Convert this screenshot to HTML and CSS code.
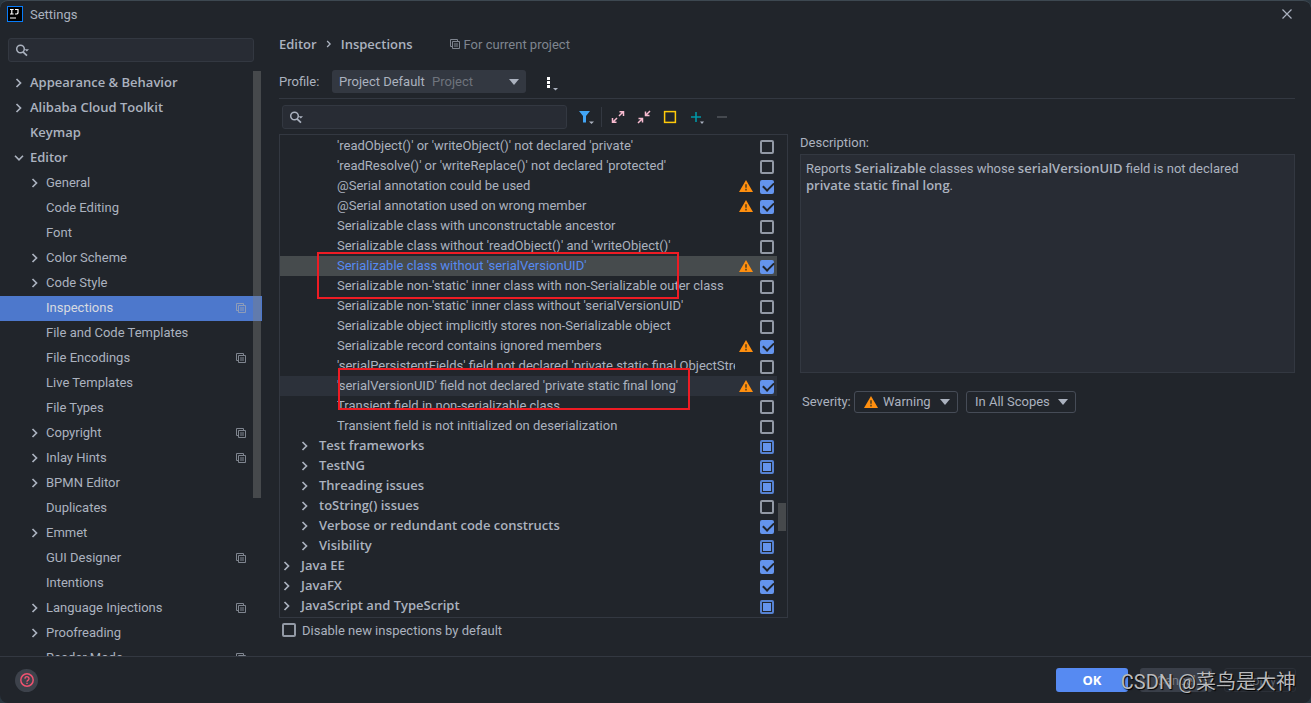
FILE: index.html
```html
<!DOCTYPE html>
<html lang="en">
<head>
<meta charset="utf-8">
<title>Settings</title>
<link rel="stylesheet" href="styles.css">
</head>
<body>
<svg class="defs" aria-hidden="true">
  <symbol id="right" viewBox="0 0 8 10"><path d="M1.5 1 5.500 5 1.500 9" fill="none" stroke="currentColor" stroke-width="1.700"/></symbol>
  <symbol id="down" viewBox="0 0 10 8"><path d="M1 1.7 5 5.9 9 1.7" fill="none" stroke="currentColor" stroke-width="1.6"/></symbol>
  <symbol id="copy" viewBox="0 0 10 10"><path d="M2.5 7.5h-2v-7h7v2M2.5 2.5h7v7h-7zM4 5h4M4 7h4" fill="none" stroke="currentColor"/></symbol>
  <symbol id="warn" viewBox="0 0 14 12"><path d="M7 0 14 12H0z" fill="#ff8f0f"/><path d="M7 4.2v3.6M7 8.8v1.7" stroke="#6b4a1c" stroke-width="1.8"/></symbol>
  <symbol id="search" viewBox="0 0 15 13"><circle cx="5.5" cy="5" r="3.8" fill="none" stroke="currentColor" stroke-width="1.5"/><path d="m8 7.8 4 3.8" stroke="currentColor" stroke-width="1.7"/><path d="M9.5 5.2H14L11.8 7.6z" fill="currentColor"/></symbol>
  <symbol id="caret" viewBox="0 0 10 6"><path d="M0 0h10L5 6z" fill="currentColor"/></symbol>
</svg>
<div class="window">
  <header class="titlebar">
    <svg class="logo" viewBox="0 0 16 16"><path d="M0 0h16v16H0z" fill="#087cfa"/><path d="M1 1h14v14H1z" fill="#000"/><path d="M3 3.5h3.6M4.8 3.5V8M3 8h3.6M8 3.5h3V7L10 8H8" fill="none" stroke="#fff" stroke-width="1.2"/><path d="M3 12h6" stroke="#fff" stroke-width="1.2"/></svg>
    <h1 class="title">Settings</h1>
    <button class="plain close" aria-label="Close"><svg viewBox="0 0 10 10" width="10" height="10"><path d="m.5.5 9 9m0-9-9 9" stroke="currentColor" stroke-width="1.2"/></svg></button>
  </header>
  <div class="content">
    <aside class="sidebar">
      <label class="search side-search"><svg><use href="#search"/></svg><input type="text" aria-label="Search settings"></label>
      <nav class="nav">
        <ul class="nav-list">
          <li class="top"><svg class="arrow"><use href="#right"/></svg><span>Appearance &amp; Behavior</span></li>
          <li class="top"><svg class="arrow"><use href="#right"/></svg><span>Alibaba Cloud Toolkit</span></li>
          <li class="top"><i class="arrow"></i><span>Keymap</span></li>
          <li class="top"><svg class="arrow open"><use href="#down"/></svg><span>Editor</span></li>
          <li><svg class="arrow"><use href="#right"/></svg><span>General</span></li>
          <li><i class="arrow"></i><span>Code Editing</span></li>
          <li><i class="arrow"></i><span>Font</span></li>
          <li><svg class="arrow"><use href="#right"/></svg><span>Color Scheme</span></li>
          <li><svg class="arrow"><use href="#right"/></svg><span>Code Style</span></li>
          <li class="selected"><i class="arrow"></i><span>Inspections</span><svg class="copy"><use href="#copy"/></svg></li>
          <li><i class="arrow"></i><span>File and Code Templates</span></li>
          <li><i class="arrow"></i><span>File Encodings</span><svg class="copy"><use href="#copy"/></svg></li>
          <li><i class="arrow"></i><span>Live Templates</span></li>
          <li><i class="arrow"></i><span>File Types</span></li>
          <li><svg class="arrow"><use href="#right"/></svg><span>Copyright</span><svg class="copy"><use href="#copy"/></svg></li>
          <li><svg class="arrow"><use href="#right"/></svg><span>Inlay Hints</span><svg class="copy"><use href="#copy"/></svg></li>
          <li><svg class="arrow"><use href="#right"/></svg><span>BPMN Editor</span></li>
          <li><i class="arrow"></i><span>Duplicates</span></li>
          <li><svg class="arrow"><use href="#right"/></svg><span>Emmet</span></li>
          <li><i class="arrow"></i><span>GUI Designer</span><svg class="copy"><use href="#copy"/></svg></li>
          <li><i class="arrow"></i><span>Intentions</span></li>
          <li><svg class="arrow"><use href="#right"/></svg><span>Language Injections</span><svg class="copy"><use href="#copy"/></svg></li>
          <li><svg class="arrow"><use href="#right"/></svg><span>Proofreading</span></li>
          <li><i class="arrow"></i><span>Reader Mode</span><svg class="copy"><use href="#copy"/></svg></li>
        </ul>
        <div class="thumb"></div>
      </nav>
    </aside>
    <main class="main">
      <div class="crumbs">
        <b>Editor</b><svg class="sep"><use href="#right"/></svg><b>Inspections</b>
        <span class="scope"><svg class="copy"><use href="#copy"/></svg>For current project</span>
      </div>
      <div class="profile">
        <label for="profile">Profile:</label>
        <div class="combo filled">
          <select id="profile"><option>Project Default</option></select>
          <span class="hint">Project</span>
          <svg class="caret"><use href="#caret"/></svg>
        </div>
        <button class="plain more" aria-label="Profile actions"><svg viewBox="0 0 12 14" width="12" height="14"><path d="M1 0h3v3H1zm0 4h3v3H1zm0 4h3v3H1z" fill="#fff"/><path d="M7 11h5l-2.5 2.5z" fill="#abb2bf"/></svg></button>
      </div>
      <div class="panes">
        <section class="inspections">
          <div class="toolbar">
            <label class="search"><svg><use href="#search"/></svg><input type="text" aria-label="Search inspections"></label>
            <div class="tools">
              <button class="plain" aria-label="Filter"><svg viewBox="0 0 16 16"><path d="M0 2h11L7 7v6.500H4V7z" fill="#42a5f5"/><path d="M10 12.5h5L12.5 15z" fill="#abb2bf"/></svg></button>
              <span class="rule"></span>
              <button class="plain" aria-label="Expand all"><svg viewBox="0 0 16 16"><path d="M9 7l4.5-4.5M9.5 2.7h4V7M7 9l-4.500 4.500M6.500 13.300h-4V9" fill="none" stroke="#f8bbd0" stroke-width="1.5"/></svg></button>
              <button class="plain" aria-label="Collapse all"><svg viewBox="0 0 16 16"><path d="M14 2 9.500 6.500M9.500 2.500v4h4M2 14l4.500-4.500M6.500 13.500v-4h-4" fill="none" stroke="#f8bbd0" stroke-width="1.5"/></svg></button>
              <button class="plain" aria-label="Reset"><svg viewBox="0 0 16 16"><rect x="2.600" y="2.600" width="10.800" height="10.800" fill="none" stroke="#ffca0a" stroke-width="1.500"/></svg></button>
              <button class="plain" aria-label="Add"><svg viewBox="0 0 16 16"><path d="M3 8h10M8 3v10" stroke="#0097a7" stroke-width="1.600"/><path d="M12 12.500h4L14 15z" fill="#abb2bf"/></svg></button>
              <button class="plain" aria-label="Remove" disabled><svg viewBox="0 0 16 16"><path d="M3 8h10" stroke="#45494f" stroke-width="2"/></svg></button>
            </div>
          </div>
          <div class="tree">
            <ul class="tree-list">
              <li><label for="c1">'readObject()' or 'writeObject()' not declared 'private'</label><input type="checkbox" id="c1"></li>
              <li><label for="c2">'readResolve()' or 'writeReplace()' not declared 'protected'</label><input type="checkbox" id="c2"></li>
              <li><label for="c3">@Serial annotation could be used</label><svg class="warn"><use href="#warn"/></svg><input type="checkbox" id="c3" checked></li>
              <li><label for="c4">@Serial annotation used on wrong member</label><svg class="warn"><use href="#warn"/></svg><input type="checkbox" id="c4" checked></li>
              <li><label for="c5">Serializable class with unconstructable ancestor</label><input type="checkbox" id="c5"></li>
              <li><label for="c6">Serializable class without 'readObject()' and 'writeObject()'</label><input type="checkbox" id="c6"></li>
              <li class="current"><label for="c7">Serializable class without 'serialVersionUID'</label><svg class="warn"><use href="#warn"/></svg><input type="checkbox" id="c7" checked></li>
              <li><label for="c8">Serializable non-'static' inner class with non-Serializable outer class</label><input type="checkbox" id="c8"></li>
              <li><label for="c9">Serializable non-'static' inner class without 'serialVersionUID'</label><input type="checkbox" id="c9"></li>
              <li><label for="c10">Serializable object implicitly stores non-Serializable object</label><input type="checkbox" id="c10"></li>
              <li><label for="c11">Serializable record contains ignored members</label><svg class="warn"><use href="#warn"/></svg><input type="checkbox" id="c11" checked></li>
              <li><label for="c12">'serialPersistentFields' field not declared 'private static final ObjectStreamField[]'</label><input type="checkbox" id="c12"></li>
              <li class="hovered"><label for="c13">'serialVersionUID' field not declared 'private static final long'</label><svg class="warn"><use href="#warn"/></svg><input type="checkbox" id="c13" checked></li>
              <li><label for="c14">Transient field in non-serializable class</label><input type="checkbox" id="c14"></li>
              <li><label for="c15">Transient field is not initialized on deserialization</label><input type="checkbox" id="c15"></li>
              <li class="group inner"><svg class="arrow"><use href="#right"/></svg><label for="c16">Test frameworks</label><input type="checkbox" class="partial" id="c16"></li>
              <li class="group inner"><svg class="arrow"><use href="#right"/></svg><label for="c17">TestNG</label><input type="checkbox" class="partial" id="c17"></li>
              <li class="group inner"><svg class="arrow"><use href="#right"/></svg><label for="c18">Threading issues</label><input type="checkbox" class="partial" id="c18"></li>
              <li class="group inner"><svg class="arrow"><use href="#right"/></svg><label for="c19">toString() issues</label><input type="checkbox" id="c19"></li>
              <li class="group inner"><svg class="arrow"><use href="#right"/></svg><label for="c20">Verbose or redundant code constructs</label><input type="checkbox" id="c20" checked></li>
              <li class="group inner"><svg class="arrow"><use href="#right"/></svg><label for="c21">Visibility</label><input type="checkbox" class="partial" id="c21"></li>
              <li class="group"><svg class="arrow"><use href="#right"/></svg><label for="c22">Java EE</label><input type="checkbox" id="c22" checked></li>
              <li class="group"><svg class="arrow"><use href="#right"/></svg><label for="c23">JavaFX</label><input type="checkbox" id="c23" checked></li>
              <li class="group"><svg class="arrow"><use href="#right"/></svg><label for="c24">JavaScript and TypeScript</label><input type="checkbox" class="partial" id="c24"></li>
            </ul>
            <div class="thumb"></div>
            <div class="mark first"></div>
            <div class="mark second"></div>
          </div>
          <div class="disable"><input type="checkbox" id="disable"><label for="disable">Disable new inspections by default</label></div>
        </section>
        <section class="details">
          <h2 class="heading">Description:</h2>
          <div class="description">Reports <b>Serializable</b> classes whose <b>serialVersionUID</b> field is not declared <b>private static final long</b>.</div>
          <div class="options">
            <label for="severity">Severity:</label>
            <div class="combo outlined">
              <svg class="warn"><use href="#warn"/></svg>
              <select id="severity" class="with-icon"><option>Warning</option></select>
              <svg class="caret"><use href="#caret"/></svg>
            </div>
            <div class="combo outlined scopes">
              <select aria-label="Scope"><option>In All Scopes</option></select>
              <svg class="caret"><use href="#caret"/></svg>
            </div>
          </div>
        </section>
      </div>
    </main>
  </div>
  <footer class="footer">
    <button class="plain help" aria-label="Help"><svg viewBox="0 0 14 14" width="14" height="14"><circle cx="7" cy="7" r="6.200" fill="none" stroke="#ef5370" stroke-width="1.500"/><path d="M5 5.700a2 2 0 1 1 3.200 1.500C7.300 7.800 7 8 7 8.800M7 9.800v1.300" fill="none" stroke="#ef5370" stroke-width="1.400"/></svg></button>
    <div class="actions">
      <button class="button primary">OK</button>
      <button class="button">Cancel</button>
      <button class="button muted" disabled>Apply</button>
      <span class="watermark">CSDN @菜鸟是大神</span>
    </div>
  </footer>
</div>
</body>
</html>
```
FILE: styles.css
```css
* { box-sizing: border-box; }
html { background: #2b3740; }
body {
  margin: 0;
  color: #abb2bf;
  font: 13px/17px Roboto, "Open Sans", "Noto Sans CJK SC", sans-serif;
}
input, select, button { font: inherit; color: inherit; }
ul { list-style: none; margin: 0; padding: 0; }
h1, h2 { margin: 0; font: inherit; }
b, .nav-list .top, .tree-list .group, .primary { font-family: "Open Sans", "Noto Sans", sans-serif; font-weight: 600; }
b { line-height: 15px; }
svg { flex: none; display: block; }
.defs { display: none; }
.plain { border: 0; padding: 0; background: none; }

.window {
  display: flex;
  flex-direction: column;
  height: 100vh;
  border-top: 1px solid #3d4851;
  border-radius: 8px;
  background: #21252b;
  overflow: hidden;
}
.titlebar {
  display: flex;
  align-items: center;
  gap: 7px;
  height: 28px;
  padding: 0 19px 2px 7px;
}
.logo { width: 16px; height: 16px; }
.title { flex: 1; }
.content { display: flex; flex: 1; min-height: 0; }

.search {
  display: flex;
  align-items: center;
  height: 24px;
  padding-left: 6px;
  border: 1px solid #333841;
  border-radius: 3px;
  background: #282c34;
}
.search svg { width: 15px; height: 13px; }
.search input { flex: 1; min-width: 0; border: 0; outline: 0; background: none; }

.sidebar { display: flex; flex-direction: column; width: 262px; flex: none; padding-top: 9px; }
.side-search { margin: 0 8px 9px; flex: none; }
.nav { position: relative; flex: 1; min-height: 0; overflow: hidden; }
.nav-list li { display: flex; align-items: center; height: 25px; padding: 0 16px 2px 31px; }
.nav-list .top { padding-left: 15px; }
.nav-list span { flex: 1; }
.arrow { width: 8px; height: 10px; margin-right: 7px; flex: none; }
.arrow.open { width: 10px; height: 8px; margin: 0 6px 0 -1px; }
.copy { width: 10px; height: 10px; color: #7f858f; }
.nav-list .selected { background: #4d78cc; color: #d7dae0; }
.selected .copy { color: #8e9cb8; }
.thumb { position: absolute; background: rgba(128, 128, 128, 0.4); }
.nav .thumb { top: 0; right: 1px; width: 8px; height: 73%; }

.main { display: flex; flex-direction: column; flex: 1; min-width: 0; padding: 0 16px 0 17px; }
.crumbs { display: flex; align-items: center; height: 32px; padding-bottom: 2px; }
.crumbs .sep { width: 6px; height: 8px; margin: 0 9px; }
.scope { display: flex; align-items: center; gap: 4px; margin-left: 37px; color: #7f858f; }
.profile {
  display: flex;
  align-items: center;
  padding: 9px 0 5px;
  border-bottom: 1px solid #333841;
}
.profile > label { width: 53px; }
.combo { position: relative; display: flex; align-items: center; }
.combo select {
  width: 100%;
  height: 100%;
  padding: 0 7px;
  border: 0;
  border-radius: 3px;
  outline: 0;
  background: none;
  appearance: none;
}
.combo .caret { position: absolute; right: 7px; width: 10px; height: 6px; pointer-events: none; }
.filled { width: 194px; height: 23px; border-radius: 3px; background: #333841; }
.hint { position: absolute; left: 100px; color: #6f747d; pointer-events: none; }
.more { margin: 4px 0 0 20px; }

.panes { display: grid; grid-template-columns: 509fr 495fr; gap: 12px; flex: 1; min-height: 0; }
.inspections { display: flex; flex-direction: column; min-width: 0; min-height: 0; }
.toolbar { display: flex; align-items: center; padding: 6px 58px 5px 3px; }
.toolbar .search { flex: 1; }
.tools { display: flex; align-items: center; gap: 10px; margin-left: 12px; }
.tools svg { width: 16px; height: 16px; }
.rule { width: 1px; height: 20px; margin: 0 -2px 0 -4px; background: #333841; }

.tree { position: relative; flex: 1; min-height: 0; padding: 1px 10px 0 0; border: 1px solid #333841; }
.tree-list { height: 100%; overflow: hidden; }
.tree-list li { display: flex; align-items: center; height: 20px; padding: 0 3px 0 57px; }
.tree-list label { flex: 1; min-width: 0; overflow: hidden; white-space: nowrap; margin-right: 25px; padding: 0 0 1px; }
.tree-list .warn { margin: 0 7px 0 -21px; }
.tree-list .group { padding-left: 3px; }
.tree-list .inner { padding-left: 21px; }
.group .arrow { margin-right: 9px; }
.tree-list .group label { padding-left: 1px; }
.tree-list .current { background: #464b4d; }
.current label { color: #568af2; }
.tree-list .hovered { background: #2c313a; }
.tree .thumb { right: 1px; bottom: 86px; width: 8px; height: 28px; }
.warn { width: 14px; height: 12px; }
.mark { position: absolute; border: 2px solid #ee1c24; pointer-events: none; }
.first { left: 37px; top: 117px; width: 362px; height: 47px; }
.second {
  left: 58px;
  top: 233px;
  width: 352px;
  height: 42px;
  background: linear-gradient(#21252b 6px, transparent 6px);
}

input[type="checkbox"] {
  display: grid;
  place-items: center;
  flex: none;
  width: 14px;
  height: 14px;
  margin: 2px 0 0;
  border: 2px solid #9299a5;
  border-radius: 2px;
  appearance: none;
}
input[type="checkbox"]:checked { border-color: #6494ed; background: #6494ed; }
input[type="checkbox"]:checked::before {
  content: "";
  width: 9px;
  height: 5px;
  margin: 0 0 4px 1px;
  border: solid #21252b;
  border-width: 0 0 2px 2px;
  transform: rotate(-45deg);
}
input[type="checkbox"].partial { border-color: #5682d2; }
input[type="checkbox"].partial::before { content: ""; width: 8px; height: 8px; background: #6494ed; }
.disable { display: flex; align-items: center; gap: 6px; height: 24px; margin: 0 0 14px 3px; }
.disable input { margin-top: 0; }

.details { display: flex; flex-direction: column; min-width: 0; padding-top: 35px; }
.heading { height: 20px; }
.description { flex: 220 1 0; padding: 5px 48px 5px 5px; border: 1px solid #333841; background: #282c34; }
.options { display: flex; flex: 282 1 0; align-items: flex-start; padding: 18px 0 0 2px; }
.options > label { width: 52px; line-height: 22px; }
.outlined { width: 104px; height: 22px; border: 1px solid #464c57; border-radius: 3px; }
.scopes { width: 110px; margin-left: 8px; }
.outlined .warn { position: absolute; left: 9px; pointer-events: none; }
.outlined select { padding-left: 8px; }
.outlined .with-icon { padding-left: 28px; }

.footer {
  display: flex;
  align-items: center;
  justify-content: space-between;
  height: 47px;
  padding: 0 15px;
  border-top: 1px solid #333841;
  flex: none;
}
.help { display: grid; place-items: center; width: 23px; height: 23px; border-radius: 50%; background: #3d424b; }
.actions { position: relative; display: flex; gap: 12px; }
.button { width: 72px; height: 24px; padding: 0; border: 0; border-radius: 3px; background: #3a3f49; color: #7d828c; }
.primary { background: #568af2; color: #fff; font-weight: 700; }
.muted { border: 1px solid #2c3038; background: none; color: #5a5f68; }
.watermark {
  position: absolute;
  right: 0;
  top: 0;
  color: #b9babc;
  font: 20px/28px Roboto, "Noto Sans CJK SC", sans-serif;
  text-shadow: 1px 1px 1px #000;
  white-space: nowrap;
}
```
